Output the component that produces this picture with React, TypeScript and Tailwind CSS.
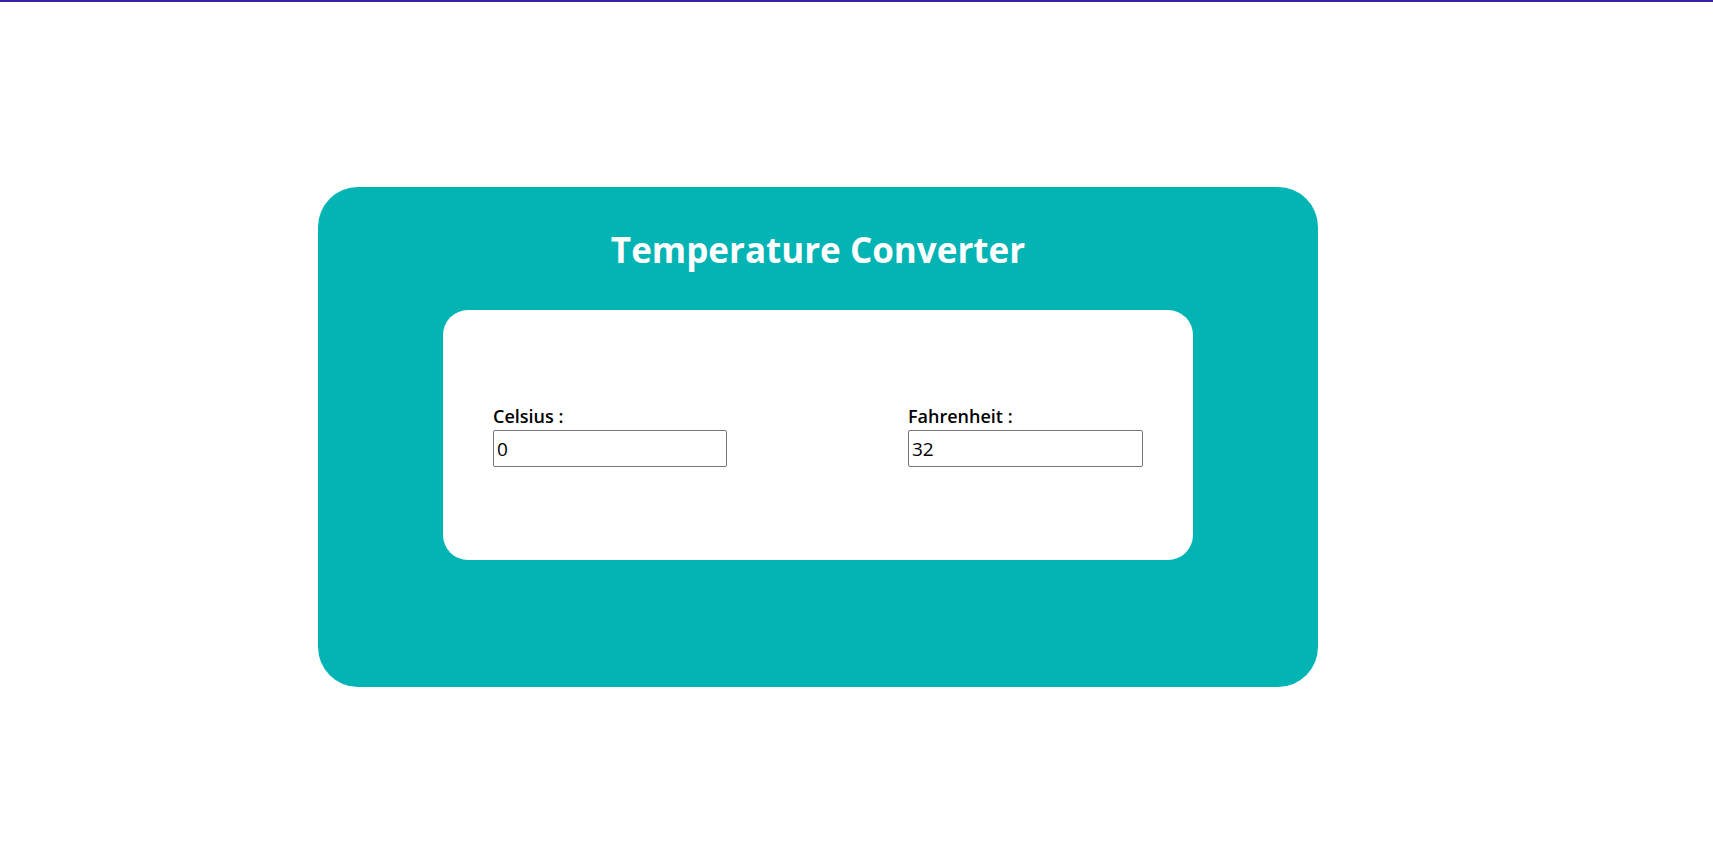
import React, { useState } from 'react';

const App = () => {
  const [celsius, setCelsius] = useState<string>('0');
  const [fahrenheit, setFahrenheit] = useState<string>('32');

  const onCelsius = (v: string) => {
    setCelsius(v);
    const n = parseFloat(v);
    setFahrenheit(isNaN(n) ? '' : String(Math.round((n * 9 / 5 + 32) * 100) / 100));
  };
  const onFahrenheit = (v: string) => {
    setFahrenheit(v);
    const n = parseFloat(v);
    setCelsius(isNaN(n) ? '' : String(Math.round(((n - 32) * 5 / 9) * 100) / 100));
  };

  return <div className="min-h-[860px] bg-white border-t-2 border-[#3a22a2] font-['Open_Sans',sans-serif]">
      <div className="pt-[185px] pl-[318px]">
        <div className="w-[1000px] h-[500px] bg-[#03b4b4] rounded-[40px] flex flex-col items-center">
          <h1 className="mt-[39px] text-[35px] leading-[48px] font-bold text-white">
            Temperature Converter
          </h1>
          <div className="mt-[36px] w-[750px] h-[250px] bg-white rounded-[25px] flex items-center justify-between px-[50px]">
            <div className="flex flex-col">
              <label className="text-[18px] leading-[27px] font-semibold text-black">Celsius :</label>
              <input
                type="text"
                value={celsius}
                onChange={e => onCelsius(e.target.value)}
                className="w-[234px] h-[37px] border border-[#767676] rounded-[2px] px-[3px] text-[19px] text-black outline-none"
              />
            </div>
            <div className="flex flex-col">
              <label className="text-[18px] leading-[27px] font-semibold text-black">Fahrenheit :</label>
              <input
                type="text"
                value={fahrenheit}
                onChange={e => onFahrenheit(e.target.value)}
                className="w-[235px] h-[37px] border border-[#767676] rounded-[2px] px-[3px] text-[19px] text-black outline-none"
              />
            </div>
          </div>
        </div>
      </div>
    </div>;
};

export default App;
